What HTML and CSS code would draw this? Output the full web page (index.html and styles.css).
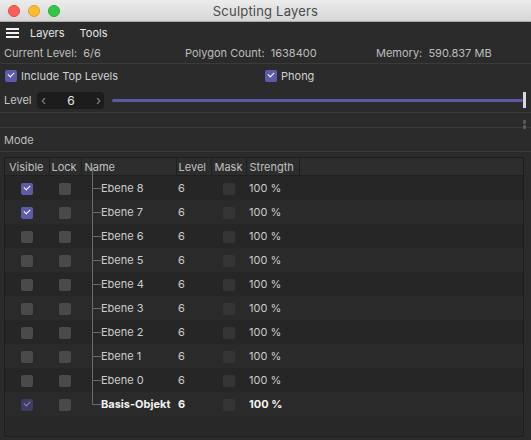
FILE: index.html
```html
<!DOCTYPE html>
<html lang="de">
<head>
<meta charset="UTF-8">
<title>Sculpting Layers</title>
<link rel="stylesheet" href="styles.css">
</head>
<body>
<div class="fenster">

<div class="titelleiste">
  <div class="ampel">
    <span class="knopf rot"></span>
    <span class="knopf gelb"></span>
    <span class="knopf gruen"></span>
  </div>
  <div class="titel">Sculpting Layers</div>
</div>

<div class="menu">
  <span class="burger"><i></i><i></i><i></i></span>
  <span class="menu-punkt">Layers</span>
  <span class="menu-punkt">Tools</span>
</div>

<div class="info">
  <span class="info-a">Current Level:&nbsp; 6/6</span>
  <span class="info-b">Polygon Count:&nbsp; 1638400</span>
  <span class="info-c">Memory:&nbsp; 590.837 MB</span>
</div>

<div class="optionen">
  <label class="opt opt-a"><span class="cb an"></span>Include Top Levels</label>
  <label class="opt"><span class="cb an"></span>Phong</label>
</div>

<div class="level-zeile">
  <span class="level-label">Level</span>
  <div class="spinner">
    <span class="pfeil">&lsaquo;</span>
    <span class="wert">6</span>
    <span class="pfeil">&rsaquo;</span>
  </div>
  <div class="regler"><div class="spur"></div><div class="griff"></div></div>
</div>

<div class="leer-zeile">
  <span class="scroll-pfeil"><i></i><i></i></span>
</div>

<div class="mode-zeile">Mode</div>

<div class="tabelle">
  <table>
    <colgroup>
      <col class="w-vis"><col class="w-lock"><col class="w-name"><col class="w-lvl"><col class="w-mask"><col class="w-str"><col>
    </colgroup>
    <thead>
      <tr>
        <th class="c-vis">Visible</th>
        <th class="c-lock">Lock</th>
        <th>Name</th>
        <th class="c-lvl">Level</th>
        <th>Mask</th>
        <th>Strength</th>
        <th class="c-rest"></th>
      </tr>
    </thead>
    <tbody>
      <tr><td class="mitte"><span class="cb an"></span></td><td class="mitte"><span class="cb"></span></td><td class="baum"><span class="ast"></span>Ebene 8</td><td>6</td><td class="mitte"><span class="cb dunkel"></span></td><td>100 %</td><td></td></tr>
      <tr><td class="mitte"><span class="cb an"></span></td><td class="mitte"><span class="cb"></span></td><td class="baum"><span class="ast"></span>Ebene 7</td><td>6</td><td class="mitte"><span class="cb dunkel"></span></td><td>100 %</td><td></td></tr>
      <tr><td class="mitte"><span class="cb"></span></td><td class="mitte"><span class="cb"></span></td><td class="baum"><span class="ast"></span>Ebene 6</td><td>6</td><td class="mitte"><span class="cb dunkel"></span></td><td>100 %</td><td></td></tr>
      <tr><td class="mitte"><span class="cb"></span></td><td class="mitte"><span class="cb"></span></td><td class="baum"><span class="ast"></span>Ebene 5</td><td>6</td><td class="mitte"><span class="cb dunkel"></span></td><td>100 %</td><td></td></tr>
      <tr><td class="mitte"><span class="cb"></span></td><td class="mitte"><span class="cb"></span></td><td class="baum"><span class="ast"></span>Ebene 4</td><td>6</td><td class="mitte"><span class="cb dunkel"></span></td><td>100 %</td><td></td></tr>
      <tr><td class="mitte"><span class="cb"></span></td><td class="mitte"><span class="cb"></span></td><td class="baum"><span class="ast"></span>Ebene 3</td><td>6</td><td class="mitte"><span class="cb dunkel"></span></td><td>100 %</td><td></td></tr>
      <tr><td class="mitte"><span class="cb"></span></td><td class="mitte"><span class="cb"></span></td><td class="baum"><span class="ast"></span>Ebene 2</td><td>6</td><td class="mitte"><span class="cb dunkel"></span></td><td>100 %</td><td></td></tr>
      <tr><td class="mitte"><span class="cb"></span></td><td class="mitte"><span class="cb"></span></td><td class="baum"><span class="ast"></span>Ebene 1</td><td>6</td><td class="mitte"><span class="cb dunkel"></span></td><td>100 %</td><td></td></tr>
      <tr><td class="mitte"><span class="cb"></span></td><td class="mitte"><span class="cb"></span></td><td class="baum"><span class="ast"></span>Ebene 0</td><td>6</td><td class="mitte"><span class="cb dunkel"></span></td><td>100 %</td><td></td></tr>
      <tr class="basis"><td class="mitte"><span class="cb an aus"></span></td><td class="mitte"><span class="cb"></span></td><td class="baum"><span class="ast"></span>Basis-Objekt</td><td>6</td><td class="mitte"><span class="cb dunkel"></span></td><td>100 %</td><td></td></tr>
    </tbody>
  </table>
</div>

</div>
</body>
</html>
```

FILE: styles.css
```css
html, body {
  margin: 0;
  padding: 0;
}

body {
  background-color: #2b2b2b;
  color: #c8c8c8;
  font-family: Inter, "Noto Sans", sans-serif;
  font-size: 11px;
}

.fenster {
  width: 531px;
  height: 440px;
  overflow: hidden;
  display: flex;
  flex-direction: column;
}

/* titelleiste */
.titelleiste {
  height: 22px;
  background: linear-gradient(#ececec, #d6d6d6);
  border-bottom: 1px solid #a9a9a9;
  box-sizing: border-box;
  display: flex;
  align-items: center;
  position: relative;
}

.ampel {
  display: flex;
  gap: 8px;
  padding-left: 8px;
}

.knopf {
  width: 12px;
  height: 12px;
  border-radius: 50%;
  box-sizing: border-box;
}
.rot { background: #fc5f57; border: 1px solid #de4a43; }
.gelb { background: #fdbc2e; border: 1px solid #dea025; }
.gruen { background: #33c748; border: 1px solid #27aa36; }

.titel {
  position: absolute;
  left: 0;
  right: 0;
  text-align: center;
  font-size: 13px;
  letter-spacing: 0.2px;
  color: #4a4a4a;
}

/* menu */
.menu {
  height: 21px;
  display: flex;
  align-items: center;
  padding-left: 6px;
  color: #e6e6e6;
}

.burger {
  display: flex;
  flex-direction: column;
  gap: 2px;
  width: 13px;
  margin-right: 11px;
}
.burger i {
  display: block;
  height: 2px;
  background: #f2f2f2;
}

.menu-punkt {
  margin-right: 15px;
}

/* info */
.info {
  height: 20px;
  display: flex;
  align-items: center;
  padding-left: 4px;
  border-bottom: 1px solid #3b3b3b;
  color: #bdbdbd;
}
.info-a { width: 181px; }
.info-b { width: 191px; }

.optionen {
  height: 24px;
  display: flex;
  align-items: center;
  padding-left: 5px;
  color: #d0d0d0;
}
.opt {
  display: flex;
  align-items: center;
  gap: 4px;
}
.opt-a { width: 260px; }

/* checkboxen */
.cb {
  display: inline-block;
  width: 12px;
  height: 12px;
  border-radius: 2px;
  background: #4a4a4a;
  position: relative;
  vertical-align: middle;
}
.cb.dunkel { background: #353535; }
.cb.an { background: #5d5aa9; }
.cb.an::after {
  content: "";
  position: absolute;
  left: 3px;
  top: 2px;
  width: 5px;
  height: 3px;
  border-left: 1.5px solid #fff;
  border-bottom: 1.5px solid #fff;
  transform: rotate(-45deg);
}
.cb.an.aus { background: #3e3c62; }
.cb.an.aus::after { border-color: #8a88a8; }

/* level */
.level-zeile {
  height: 24px;
  display: flex;
  align-items: center;
  padding-left: 4px;
  border-bottom: 1px solid #3b3b3b;
  color: #c6c6c6;
}
.level-label { width: 33px; }

.spinner {
  width: 67px;
  height: 17px;
  background: #1c1c1c;
  border-radius: 4px;
  display: flex;
  align-items: center;
  justify-content: space-between;
  padding: 0 3px 0 4px;
  box-sizing: border-box;
  margin-top: 1px;
}
.pfeil {
  color: #8a8a8a;
  font-size: 13px;
  line-height: 13px;
}
.wert {
  color: #e8e8e8;
  font-size: 12px;
}

.regler {
  flex: 1;
  position: relative;
  height: 18px;
  margin-left: 8px;
  margin-right: 5px;
  display: flex;
  align-items: center;
}
.spur {
  flex: 1;
  height: 3px;
  border-radius: 2px;
  background: #5b58a4;
}
.griff {
  width: 3px;
  height: 16px;
  background: #d8d8d8;
}

.leer-zeile {
  height: 14px;
  border-bottom: 1px solid #3b3b3b;
  position: relative;
}
.scroll-pfeil {
  position: absolute;
  right: 5px;
  top: 7px;
  display: flex;
  flex-direction: column;
  gap: 1px;
}
.scroll-pfeil i {
  display: block;
  width: 3px;
  height: 4px;
  background: #5a5a5a;
  border-radius: 1px;
}

.mode-zeile {
  height: 23px;
  line-height: 24px;
  padding-left: 4px;
  border-bottom: 1px solid #3b3b3b;
  color: #bdbdbd;
}

/* tabelle */
.tabelle {
  flex: 1;
  margin: 5px 7px 3px 4px;
  border: 1px solid #1d1d1d;
  background: #282828;
}

table {
  border-collapse: collapse;
  table-layout: fixed;
  width: 100%;
}

.w-vis { width: 44px; }
.w-lock { width: 32px; }
.w-name { width: 95px; }
.w-lvl { width: 35px; }
.w-mask { width: 35px; }
.w-str { width: 53px; }

th {
  height: 17px;
  padding: 0 0 0 3px;
  text-align: left;
  font-weight: normal;
  color: #c0c0c0;
  background: #2d2d2d;
  border-right: 1px solid #1f1f1f;
  border-bottom: 1px solid #1f1f1f;
}
th.c-rest { border-right: none; }
th.c-vis { padding-left: 4px; }
th.c-lock, th.c-lvl { padding-left: 2px; }

td {
  height: 24px;
  padding: 0 0 0 3px;
  color: #cdcdcd;
}
td:nth-child(4) { padding-left: 2px; }
tbody tr:nth-child(odd) td { background: #262626; }
tbody tr:nth-child(even) td { background: #2a2a2a; }
td.mitte {
  padding: 0;
  text-align: center;
}

.baum {
  position: relative;
  padding-left: 20px;
}
.ast {
  position: absolute;
  left: 11px;
  top: -12px;
  width: 8px;
  height: 24px;
  border-left: 1px solid #6a6a6a;
  border-bottom: 1px solid #6a6a6a;
}
tbody tr:first-child .ast {
  top: -9px;
  height: 21px;
}

.basis td {
  color: #f2f2f2;
  font-weight: bold;
}
```
